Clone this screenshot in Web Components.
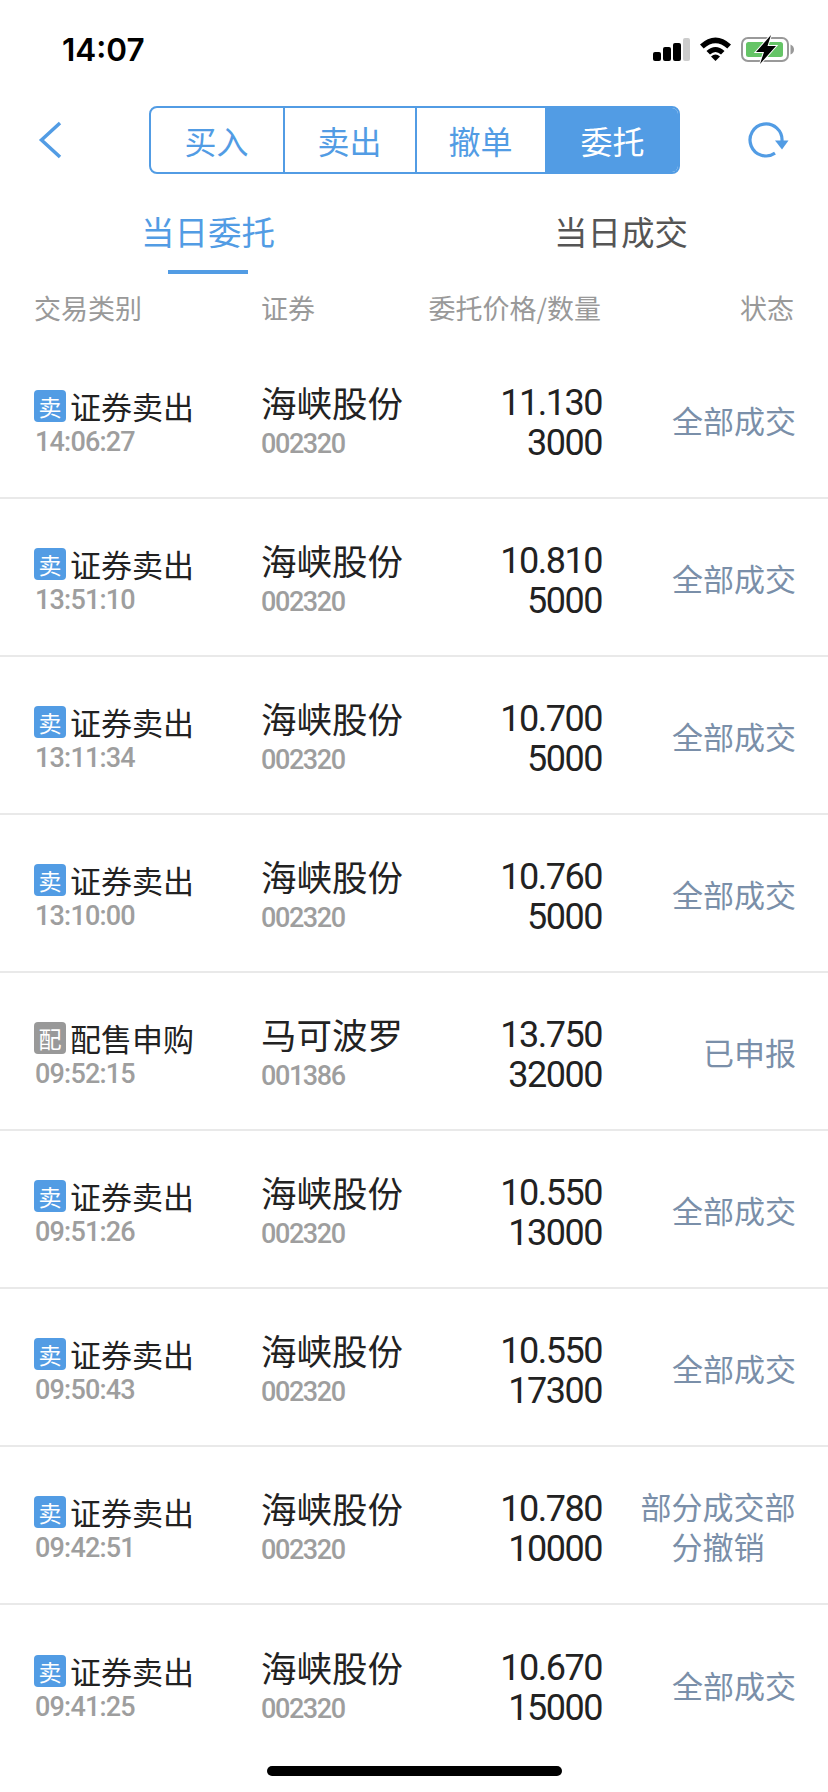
<!DOCTYPE html>
<html lang="zh-CN"><head><meta charset="utf-8"><title>委托</title>
<style>
html,body{margin:0;padding:0;background:#fff}
body{width:828px;height:1792px;overflow:hidden;position:relative;font-family:"Noto Sans CJK SC","Noto Sans",sans-serif;--blue:#529ce4}
</style></head><body>
<status-bar></status-bar>
<nav-bar active="3"></nav-bar>
<tab-bar></tab-bar>
<order-head></order-head>
<order-row kind="卖" name="证券卖出" time="14:06:27" stock="海峡股份" code="002320" price="11.130" qty="3000" status="全部成交"></order-row>
<order-row kind="卖" name="证券卖出" time="13:51:10" stock="海峡股份" code="002320" price="10.810" qty="5000" status="全部成交"></order-row>
<order-row kind="卖" name="证券卖出" time="13:11:34" stock="海峡股份" code="002320" price="10.700" qty="5000" status="全部成交"></order-row>
<order-row kind="卖" name="证券卖出" time="13:10:00" stock="海峡股份" code="002320" price="10.760" qty="5000" status="全部成交"></order-row>
<order-row kind="配" name="配售申购" time="09:52:15" stock="马可波罗" code="001386" price="13.750" qty="32000" status="已申报"></order-row>
<order-row kind="卖" name="证券卖出" time="09:51:26" stock="海峡股份" code="002320" price="10.550" qty="13000" status="全部成交"></order-row>
<order-row kind="卖" name="证券卖出" time="09:50:43" stock="海峡股份" code="002320" price="10.550" qty="17300" status="全部成交"></order-row>
<order-row kind="卖" name="证券卖出" time="09:42:51" stock="海峡股份" code="002320" price="10.780" qty="10000" status="部分成交部分撤销"></order-row>
<order-row kind="卖" name="证券卖出" time="09:41:25" stock="海峡股份" code="002320" price="10.670" qty="15000" status="全部成交" last></order-row>
<home-bar></home-bar>
<script>
function def(name, html){
  customElements.define(name, class extends HTMLElement{
    connectedCallback(){
      if(this.shadowRoot) return;
      const s=this.attachShadow({mode:'open'});
      s.innerHTML=typeof html==='function'?html(this):html;
    }
  });
}
def('status-bar',`<style>
:host{display:flex;height:106px;box-sizing:border-box;padding:0 32px 0 62px;justify-content:space-between;align-items:flex-start}
.t{font:600 31.500px/30px Inter,"Liberation Sans",sans-serif;color:#000;margin-top:35px}
svg{display:block;margin-top:34px}
</style><div class="t">14:07</div>
<svg width="143" height="30" viewBox="653 34 143 30">
<rect x="653" y="52" width="8" height="9" rx="2" fill="#000"/>
<rect x="663" y="47" width="8" height="14" rx="2" fill="#000"/>
<rect x="673" y="43" width="8" height="18" rx="2" fill="#000"/>
<rect x="683" y="38" width="7" height="23" rx="2" fill="#ccc"/>
<path d="M700 44.500Q715.500 30.500 731 44.500L727.300 48.500Q715.500 38 703.700 48.500Z" fill="#000"/>
<path d="M706.500 51Q715.500 43 724.500 51L721 54.500Q715.500 49.500 710 54.500Z" fill="#000"/>
<path d="M711 56.500Q715.500 52.500 720 56.500L715.500 61Z" fill="#000"/>
<rect x="742" y="38" width="46" height="23" rx="6" fill="none" stroke="#999" stroke-width="2"/>
<rect x="746" y="42" width="37" height="15" rx="2.500" fill="#65c466"/>
<path d="M790.500 44.500Q794 46 794 49.500Q794 53 790.500 54.500Z" fill="#999"/>
<path d="M771 35L756 52H764L760 64L776 46H767.500Z" fill="#000" stroke="#fff" stroke-width="2" paint-order="stroke"/>
</svg>`);
def('nav-bar',`<style>
:host{display:flex;align-items:flex-start;height:68px;position:relative;padding-left:149px;box-sizing:border-box;width:828px}
.back,.ref{position:absolute;top:0;display:block}
.back{left:34px}.ref{left:744px}
.seg{display:grid;grid-template-columns:134px 132px 130px 135px;width:531px;height:68px;box-sizing:border-box;border:2px solid var(--blue);border-radius:8px;overflow:hidden}
.seg div{display:flex;align-items:center;justify-content:center;color:var(--blue);font-size:32px;line-height:1;border-right:2px solid var(--blue);padding-right:1px}
.seg div:last-child{border-right:0;padding-right:4px}
.seg .on{background:var(--blue);color:#fff}
</style>
<svg class="back" width="30" height="68" viewBox="34 106 30 68"><path d="M60 123L41.500 140L60 157" fill="none" stroke="#529ce4" stroke-width="3.500"/></svg>
<div class="seg"><div>买入</div><div>卖出</div><div>撤单</div><div class="on">委托</div></div>
<svg class="ref" width="48" height="68" viewBox="744 106 48 68"><path d="M775 153.200A16 16 0 1 1 782 141" fill="none" stroke="#529ce4" stroke-width="3.200"/><path d="M775 140.500H788.500L782 149.500Z" fill="#529ce4"/></svg>`);
def('tab-bar',`<style>
:host{display:grid;grid-template-columns:416px 412px;height:100px;box-sizing:border-box;padding-top:26px}
.tab{display:flex;flex-direction:column;align-items:center;font-size:33.500px;line-height:62px;color:#555;height:74px;box-sizing:border-box}
.tab.on{color:var(--blue)}
.tab.on::after{content:"";width:80px;height:4px;background:var(--blue);margin-top:8px;margin-right:1px}
.tab:first-child{margin-left:-2px}
.tab:last-child{margin-left:-1px;width:412px}
</style><div class="tab on">当日委托</div><div class="tab">当日成交</div>`);
const grid=`display:grid;padding:0 32px 0 34px;box-sizing:border-box;width:828px;`;
def('order-head',`<style>
:host{${grid}grid-template-columns:227px 120px 220px 195px;height:67px;align-items:center;align-content:center;font-size:27px;color:#999;line-height:36px;white-space:nowrap}
.r{text-align:right}.s{padding-right:2px}
</style><div>交易类别</div><div>证券</div><div class="r">委托价格/数量</div><div class="r s">状态</div>`);
def('order-row',(h)=>{
 const a=n=>h.getAttribute(n);
 const sell=a('kind')==='卖';
 return `<style>
:host{${grid}grid-template-columns:227px 170px 170px 195px;height:158px;align-items:center;${h.hasAttribute('last')?'':'border-bottom:2px solid #e9e9e9;'}color:#222}
.shift{transform:translateY(5px)}
.name{display:flex;align-items:center;gap:4px;height:36px;font-size:31px;line-height:36px}
.badge{width:32px;height:32px;border-radius:4px;background:${sell?'var(--blue)':'#999'};color:#fff;font-size:23px;line-height:32px;text-align:center;flex:none}
.sub{font:500 27px/36px Roboto,sans-serif;color:#9e9e9e;letter-spacing:-1.400px}
.time{padding-left:1px;letter-spacing:-.8px}
.stock{font-size:35.500px;line-height:36px;margin-top:-2px}
.code{margin-top:6px}
.num{text-align:right;font:400 36px/40px Roboto,sans-serif;letter-spacing:-1.500px;transform:translate(1px,4px)}
.st{justify-self:end;max-width:156px;text-align:center;font-size:31px;line-height:40px;color:#7a8fa9;transform:translateY(1px)}
</style>
<div class="shift"><div class="name"><span class="badge">${a('kind')}</span><span>${a('name')}</span></div><div class="sub time">${a('time')}</div></div>
<div class="shift"><div class="stock">${a('stock')}</div><div class="sub code">${a('code')}</div></div>
<div class="num"><div>${a('price')}</div><div>${a('qty')}</div></div>
<div class="st">${a('status')}</div>`;
});
def('home-bar',`<style>
:host{display:block;position:absolute;left:267px;top:1766px;width:295px;height:10px;border-radius:5px;background:#000}
</style>`);
</script></body></html>
